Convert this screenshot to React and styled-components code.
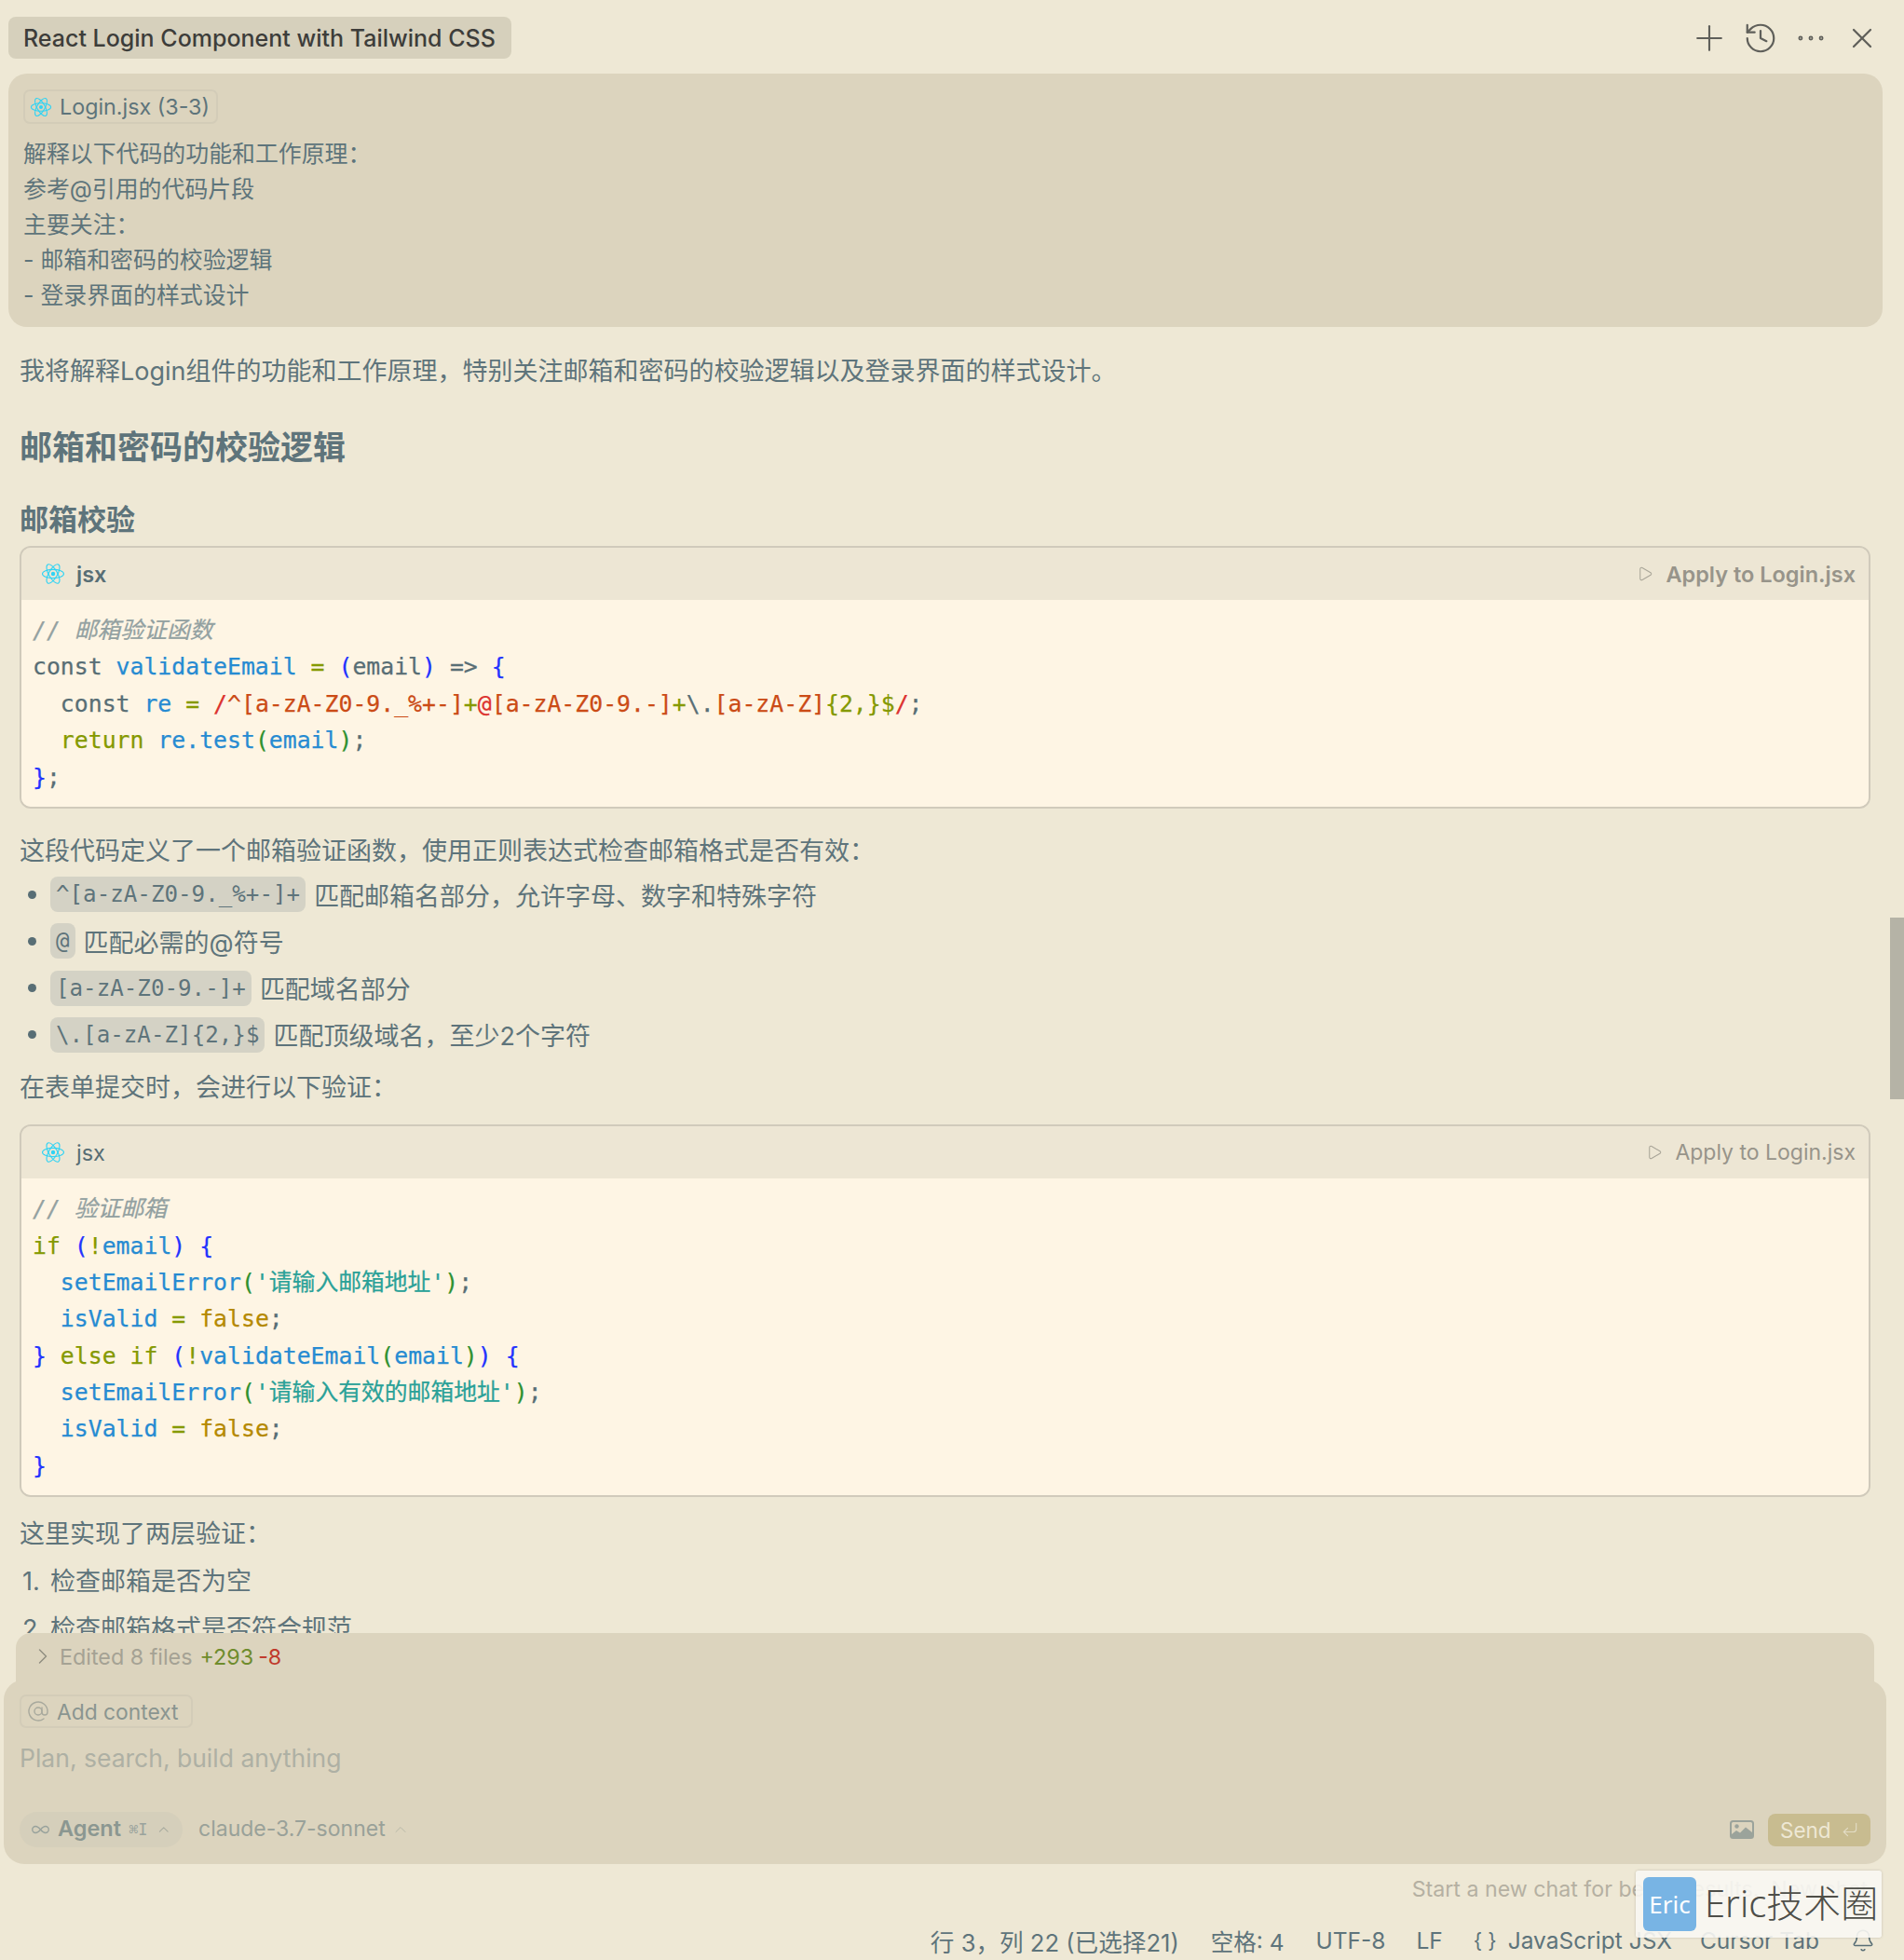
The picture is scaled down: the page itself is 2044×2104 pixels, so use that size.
import styled, { createGlobalStyle } from "styled-components";
import {
  AtSign,
  Bell,
  ChevronRight,
  ChevronUp,
  CornerDownLeft,
  Ellipsis,
  History,
  Infinity as InfinityIcon,
  Play,
  Plus,
  X,
} from "lucide-react";

const SANS = `Inter, "Noto Sans CJK SC", sans-serif`;
const MONO = `"DejaVu Sans Mono", "Noto Sans CJK SC", monospace`;

const c = {
  base: "#586e75",
  text: "#5e747b",
  blue: "#268bd2",
  green: "#859900",
  br1: "#2233ff",
  br2: "#2f9130",
  red: "#dc322f",
  orange: "#cb4b16",
  cyan: "#2aa198",
  yellow: "#b58900",
};

const emailLines = [
  [["const ", c.base], ["validateEmail", c.blue], [" = ", c.green], ["(", c.br1], ["email", c.base], [")", c.br1], [" => ", c.base], ["{", c.br1]],
  [["  const ", c.base], ["re", c.blue], [" = ", c.green], ["/", c.red], ["^[a-zA-Z0-9._%+-]", c.orange], ["+", c.green], ["@", c.red], ["[a-zA-Z0-9.-]", c.orange], ["+", c.green], ["\\.", c.base], ["[a-zA-Z]", c.orange], ["{2,}$", c.green], ["/", c.red], [";", c.base]],
  [["  return ", c.green], ["re.test", c.blue], ["(", c.br2], ["email", c.blue], [")", c.br2], [";", c.base]],
  [["}", c.br1], [";", c.base]],
];

const submitLines = [
  [["if ", c.green], ["(", c.br1], ["!", c.green], ["email", c.blue], [")", c.br1], [" ", c.base], ["{", c.br1]],
  [["  setEmailError", c.blue], ["(", c.br2], ["'请输入邮箱地址'", c.cyan], [")", c.br2], [";", c.base]],
  [["  isValid", c.blue], [" = ", c.green], ["false", c.yellow], [";", c.base]],
  [["}", c.br1], [" else if ", c.green], ["(", c.br1], ["!", c.green], ["validateEmail", c.blue], ["(", c.br2], ["email", c.blue], [")", c.br2], [")", c.br1], [" ", c.base], ["{", c.br1]],
  [["  setEmailError", c.blue], ["(", c.br2], ["'请输入有效的邮箱地址'", c.cyan], [")", c.br2], [";", c.base]],
  [["  isValid", c.blue], [" = ", c.green], ["false", c.yellow], [";", c.base]],
  [["}", c.br1]],
];

const ReactIcon = ({ size = 26 }) => (
  <svg width={size} height={size} viewBox="0 0 26 26" fill="none" stroke="#2fd3f4" strokeWidth="1.1">
    <ellipse cx="13" cy="13" rx="11.5" ry="4.6" />
    <ellipse cx="13" cy="13" rx="11.5" ry="4.6" transform="rotate(60 13 13)" />
    <ellipse cx="13" cy="13" rx="11.5" ry="4.6" transform="rotate(120 13 13)" />
    <circle cx="13" cy="13" r="2.2" fill="#2fd3f4" stroke="none" />
  </svg>
);

const ImageIcon = () => (
  <svg width="26" height="20" viewBox="0 0 26 20">
    <rect x="1" y="1" width="24" height="18" rx="2.5" fill="none" stroke="#9ba39b" strokeWidth="2" />
    <circle cx="7.5" cy="6.5" r="2.2" fill="#9ba39b" />
    <path d="M2 18 L2 15 L7 11 L11 13.5 L17 7.5 L24 13 L24 18 Z" fill="#9ba39b" />
  </svg>
);

const CodeBlock = ({ lines, comment, strong }) => (
  <Block>
    <BlockHead>
      <ReactIcon />
      <Lang $strong={strong}>jsx</Lang>
      <Apply $strong={strong}>
        <Play size={18} strokeWidth={1.4} color="#a9a598" />
        Apply to Login.jsx
      </Apply>
    </BlockHead>
    <BlockBody>
      <CodeLine><Comment>{comment}</Comment></CodeLine>
      {lines.map((line, i) => (
        <CodeLine key={i}>
          {line.map(([text, color], j) => (
            <Tok key={j} $c={color}>{text}</Tok>
          ))}
        </CodeLine>
      ))}
    </BlockBody>
  </Block>
);

const App = () => (
  <Page>
    <GlobalStyle />
    <Header>
      <TitlePill>React Login Component with Tailwind CSS</TitlePill>
      <HeaderIcons>
        <IconSlot><Plus size={44} strokeWidth={1.15} /></IconSlot>
        <IconSlot><History size={38} strokeWidth={1.4} /></IconSlot>
        <IconSlot><Ellipsis size={38} strokeWidth={1.1} /></IconSlot>
        <IconSlot><X size={36} strokeWidth={1.5} /></IconSlot>
      </HeaderIcons>
    </Header>

    <Scroll>
      <UserBox>
        <FileChip>
          <ReactIcon size={24} />
          Login.jsx (3-3)
        </FileChip>
        <UserLines>
          <div>解释以下代码的功能和工作原理：</div>
          <div>参考@引用的代码片段</div>
          <div>主要关注：</div>
          <div>- 邮箱和密码的校验逻辑</div>
          <div>- 登录界面的样式设计</div>
        </UserLines>
      </UserBox>

      <Messages>
        <Para $top={26}>我将解释Login组件的功能和工作原理，特别关注邮箱和密码的校验逻辑以及登录界面的样式设计。</Para>
        <H2>邮箱和密码的校验逻辑</H2>
        <H3>邮箱校验</H3>
        <CodeBlock lines={emailLines} comment="// 邮箱验证函数" strong />
        <Para $top={24}>这段代码定义了一个邮箱验证函数，使用正则表达式检查邮箱格式是否有效：</Para>
        <BulletList>
          <Bullet><Dot /><InlineCode>^[a-zA-Z0-9._%+-]+</InlineCode>匹配邮箱名部分，允许字母、数字和特殊字符</Bullet>
          <Bullet><Dot /><InlineCode>@</InlineCode>匹配必需的@符号</Bullet>
          <Bullet><Dot /><InlineCode>[a-zA-Z0-9.-]+</InlineCode>匹配域名部分</Bullet>
          <Bullet><Dot /><InlineCode>\.[a-zA-Z]{"{2,}"}$</InlineCode>匹配顶级域名，至少2个字符</Bullet>
        </BulletList>
        <Para $top={10}>在表单提交时，会进行以下验证：</Para>
        <BlockGap />
        <CodeBlock lines={submitLines} comment="// 验证邮箱" />
        <Para $top={18}>这里实现了两层验证：</Para>
        <NumberList>
          <NumberRow><Num>1.</Num>检查邮箱是否为空</NumberRow>
          <NumberRow><Num>2.</Num>检查邮箱格式是否符合规范</NumberRow>
        </NumberList>
      </Messages>
      <ScrollThumb />
    </Scroll>

    <EditedBar>
      <ChevronRight size={28} strokeWidth={1.2} color="#8f8d80" />
      <EditedText>Edited 8 files</EditedText>
      <Added>+293</Added>
      <Removed>-8</Removed>
    </EditedBar>

    <Composer>
      <ContextChip>
        <AtSign size={24} strokeWidth={1.4} color="#a8a99d" />
        Add context
      </ContextChip>
      <Placeholder>Plan, search, build anything</Placeholder>
      <Toolbar>
        <AgentPill>
          <InfinityIcon size={24} strokeWidth={1.6} color="#98a29c" />
          <AgentName>Agent</AgentName>
          <Shortcut>⌘I</Shortcut>
          <ChevronUp size={20} strokeWidth={1.4} color="#a7aa9e" />
        </AgentPill>
        <ModelName>claude-3.7-sonnet</ModelName>
        <ChevronUp size={20} strokeWidth={1.2} color="#b8b8a8" />
        <ToolbarRight>
          <ImageIcon />
          <SendButton>
            Send
            <CornerDownLeft size={20} strokeWidth={1.4} color="#e2dcc4" />
          </SendButton>
        </ToolbarRight>
      </Toolbar>
    </Composer>

    <Hint>Start a new chat for better results.&nbsp;&nbsp;New chat</Hint>

    <StatusBar>
      <StatusItem $gap={34} $size={25.6}>行 3，列 22 (已选择21)</StatusItem>
      <StatusItem $gap={34}>空格: 4</StatusItem>
      <StatusItem $gap={33}>UTF-8</StatusItem>
      <StatusItem $gap={33}>LF</StatusItem>
      <StatusItem $gap={12} $size={22}>{"{ }"}</StatusItem>
      <StatusItem $gap={30}>JavaScript JSX</StatusItem>
      <StatusItem $gap={34}>Cursor Tab</StatusItem>
      <Bell size={26} strokeWidth={1.4} color={c.base} />
    </StatusBar>

    <Watermark>
      <WatermarkLogo>Eric</WatermarkLogo>
      <WatermarkText>Eric技术圈</WatermarkText>
    </Watermark>
  </Page>
);

const GlobalStyle = createGlobalStyle`
  html, body {
    margin: 0;
    padding: 0;
    background: #eee8d5;
  }
  body {
    overflow: hidden;
    font-family: ${SANS};
  }
  * {
    box-sizing: border-box;
  }
`;

const Page = styled.div`
  position: relative;
  width: 2044px;
  height: 2104px;
  overflow: hidden;
  display: flex;
  flex-direction: column;
  background: #eee8d5;
  color: ${c.text};
`;

const Header = styled.div`
  flex: none;
  height: 79px;
  padding: 18px 18px 16px 9px;
  display: flex;
  align-items: center;
  justify-content: space-between;
`;

const TitlePill = styled.div`
  height: 45px;
  padding: 0 17px 0 16px;
  display: flex;
  align-items: center;
  background: #d6d0bc;
  border-radius: 8px;
  color: #3d3d3a;
  font-size: 25px;
  font-weight: 500;
`;

const HeaderIcons = styled.div`
  display: flex;
  align-items: center;
  color: #5f5f5a;
`;

const IconSlot = styled.div`
  width: 54.5px;
  display: flex;
  justify-content: center;
`;

const Scroll = styled.div`
  position: relative;
  flex: none;
  height: 1674px;
  overflow: hidden;
`;

const ScrollThumb = styled.div`
  position: absolute;
  top: 906px;
  right: 0;
  width: 15px;
  height: 195px;
  background: #b5b3a6;
`;

const UserBox = styled.div`
  margin: 0 23px 0 9px;
  height: 272px;
  padding: 17px 16px 15px;
  background: #dcd4be;
  border-radius: 20px;
`;

const FileChip = styled.div`
  display: inline-flex;
  align-items: center;
  gap: 8px;
  height: 37px;
  padding: 0 7px 0 5px;
  border: 2px solid #d3ccb8;
  border-radius: 7px;
  font-size: 23.3px;
  color: ${c.text};
`;

const UserLines = styled.div`
  margin-top: 13px;
  font-size: 24.9px;
  line-height: 38px;
`;

const Messages = styled.div`
  padding: 0 36px 0 21px;
  font-size: 27px;
`;

const Para = styled.div`
  height: 38px;
  margin-top: ${(p) => p.$top}px;
  padding-top: 3px;
  line-height: 38px;
  white-space: nowrap;
`;

const H2 = styled.div`
  height: 50px;
  margin-top: 39px;
  padding-top: 1px;
  font-size: 35px;
  font-weight: 700;
  line-height: 50px;
`;

const H3 = styled.div`
  height: 44px;
  margin-top: 31px;
  padding-top: 1px;
  font-size: 31px;
  font-weight: 700;
  line-height: 44px;
`;

const Block = styled.div`
  margin-top: 7px;
  border: 2px solid #d0cabb;
  border-radius: 12px;
  overflow: hidden;
`;

const BlockGap = styled.div`
  height: 16px;
`;

const BlockHead = styled.div`
  height: 56px;
  padding: 0 14px 0 21px;
  display: flex;
  align-items: center;
  background: #ede6d4;
`;

const Lang = styled.span`
  margin-left: 12px;
  font-family: ${SANS};
  font-size: 23.5px;
  font-weight: ${(p) => (p.$strong ? 600 : 400)};
  color: ${c.base};
`;

const Apply = styled.span`
  margin-left: auto;
  display: flex;
  align-items: center;
  gap: 13px;
  font-family: ${SANS};
  font-size: ${(p) => (p.$strong ? 23.5 : 23)}px;
  font-weight: ${(p) => (p.$strong ? 600 : 400)};
  color: #97948a;
`;

const BlockBody = styled.div`
  padding: 13px 12px 12px;
  background: #fef5e4;
  font-family: ${MONO};
  font-size: 24.8px;
  -webkit-text-stroke: 0.25px;
`;

const CodeLine = styled.div`
  height: 39.4px;
  line-height: 39.4px;
  white-space: pre;
`;

const Comment = styled.span`
  color: #93a1a1;
  font-style: italic;
`;

const Tok = styled.span`
  color: ${(p) => p.$c};
`;

const BulletList = styled.div`
  margin-top: 5px;
`;

const Bullet = styled.div`
  height: 50.3px;
  display: flex;
  align-items: center;
`;

const Dot = styled.span`
  width: 9px;
  height: 9px;
  margin: 0 15px 0 9px;
  border-radius: 50%;
  background: ${c.base};
`;

const InlineCode = styled.code`
  height: 38px;
  margin-right: 9px;
  padding: 0 6px;
  display: flex;
  align-items: center;
  background: #d4d2c5;
  border-radius: 8px;
  font-family: ${MONO};
  font-size: 24.2px;
`;

const NumberList = styled.div`
  margin-top: 13px;
`;

const NumberRow = styled.div`
  height: 51px;
  padding-top: 3px;
  line-height: 38px;
  display: flex;
`;

const Num = styled.span`
  width: 33px;
  padding-left: 3px;
`;

const EditedBar = styled.div`
  flex: none;
  height: 70px;
  margin: 0 32px -20px 17px;
  padding: 0 0 20px 15px;
  display: flex;
  align-items: center;
  background: #dcd4be;
  border-radius: 16px 16px 0 0;
  font-size: 23.3px;
`;

const EditedText = styled.span`
  margin-left: 4px;
  color: #a5a294;
`;

const Added = styled.span`
  margin-left: 8px;
  color: #6f8c2d;
`;

const Removed = styled.span`
  margin-left: 5px;
  color: #c0392b;
`;

const Composer = styled.div`
  position: relative;
  flex: none;
  height: 198px;
  margin: 0 19px 0 4px;
  padding: 16px 17px 18px;
  display: flex;
  flex-direction: column;
  align-items: flex-start;
  background: #dcd4be;
  border-radius: 22px;
`;

const ContextChip = styled.div`
  height: 36px;
  padding: 0 13px 0 6px;
  display: flex;
  align-items: center;
  gap: 8px;
  border: 2px solid #d3ccb8;
  border-radius: 7px;
  font-size: 22.8px;
  color: #8a9590;
`;

const Placeholder = styled.div`
  margin-top: 12px;
  font-size: 26.5px;
  line-height: 40px;
  color: #aeb0a4;
`;

const Toolbar = styled.div`
  margin-top: auto;
  width: 100%;
  height: 38px;
  display: flex;
  align-items: center;
`;

const AgentPill = styled.div`
  width: 175px;
  height: 38px;
  padding: 0 12px;
  display: flex;
  align-items: center;
  background: #d5cfbb;
  border-radius: 19px;
`;

const AgentName = styled.span`
  margin-left: 8px;
  padding-bottom: 3px;
  font-size: 23.5px;
  font-weight: 600;
  color: #8b9791;
`;

const Shortcut = styled.span`
  margin: 0 8px;
  font-family: ${MONO};
  font-size: 17px;
  color: #9aa39d;
`;

const ModelName = styled.span`
  margin: 0 6px 0 17px;
  padding-bottom: 3px;
  font-size: 23px;
  color: #99a199;
`;

const ToolbarRight = styled.div`
  margin-left: auto;
  display: flex;
  align-items: center;
  gap: 15px;
`;

const SendButton = styled.div`
  width: 110px;
  height: 35px;
  padding-left: 13px;
  display: flex;
  align-items: center;
  gap: 10px;
  background: #c8bc90;
  border-radius: 8px;
  font-size: 22.5px;
  color: #eee8d5;
`;

const Hint = styled.div`
  flex: none;
  height: 54px;
  padding-right: 39px;
  display: flex;
  align-items: center;
  justify-content: flex-end;
  font-size: 23.2px;
  color: #b5b0a2;
`;

const StatusBar = styled.div`
  flex: none;
  height: 42px;
  margin-top: 7px;
  padding-right: 31px;
  display: flex;
  align-items: center;
  justify-content: flex-end;
  font-size: 24.5px;
  white-space: nowrap;
  color: ${c.text};
`;

const StatusItem = styled.span`
  margin-right: ${(p) => p.$gap}px;
  font-size: ${(p) => p.$size || 24.5}px;
`;

const Watermark = styled.div`
  position: absolute;
  right: 24px;
  bottom: 24px;
  width: 264px;
  height: 72px;
  padding-left: 8px;
  display: flex;
  align-items: center;
  gap: 9px;
  background: rgba(248, 247, 243, 0.9);
  border-radius: 3px;
  box-shadow: 0 0 3px rgba(0, 0, 0, 0.18);
`;

const WatermarkLogo = styled.div`
  flex: none;
  width: 57px;
  height: 58px;
  display: flex;
  align-items: center;
  justify-content: center;
  background: #78b4e4;
  border-radius: 6px;
  font-family: "Noto Sans", sans-serif;
  font-size: 26px;
  color: #ffffff;
`;

const WatermarkText = styled.div`
  padding-bottom: 6px;
  font-family: "Noto Sans", "Noto Sans CJK SC", sans-serif;
  font-size: 40px;
  font-weight: 300;
  color: #4e4e48;
  white-space: nowrap;
`;

export default App;
